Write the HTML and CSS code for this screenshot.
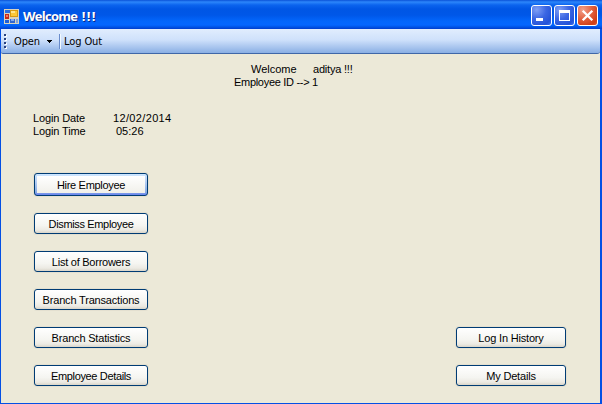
FILE: index.html
```html
<!DOCTYPE html>
<html lang="en">
<head>
<meta charset="utf-8">
<title>Welcome !!!</title>
<link rel="stylesheet" href="styles.css">
</head>
<body>
<div class="window">
  <header class="titlebar">
    <svg class="app-icon" width="15" height="15" viewBox="0 0 15 15" shape-rendering="crispEdges">
      <rect width="15" height="15" fill="#d9d3bd"/>
      <rect x="1" y="1" width="5" height="3" fill="#2b6fe0"/>
      <rect x="1" y="5" width="4" height="5" fill="#c62a18"/>
      <rect x="2" y="6" width="2" height="2" fill="#ee7b63"/>
      <rect x="6" y="1" width="8" height="7" fill="#d79a12"/>
      <rect x="7" y="2" width="6" height="5" fill="#fbc737"/>
      <rect x="7" y="2" width="4" height="2" fill="#ffe58b"/>
      <rect x="6" y="10" width="5" height="4" fill="#3567ce"/>
      <rect x="7" y="10" width="3" height="2" fill="#83aaf0"/>
      <rect x="1" y="11" width="4" height="3" fill="#1e5fda"/>
      <rect x="12" y="10" width="2" height="4" fill="#7da1df"/>
    </svg>
    <h1 class="title">Welcome <span class="marks">!!!</span></h1>
    <div class="controls">
      <button class="control" aria-label="Minimize"><svg width="21" height="21" viewBox="0 0 21 21"><path d="M5 13h7v3H5z" fill="#fff"/></svg></button>
      <button class="control" aria-label="Maximize"><svg width="21" height="21" viewBox="0 0 21 21"><path d="M5 5h11v11H5zM6 8v7h9V8z" fill="#fff" fill-rule="evenodd"/></svg></button>
      <button class="control close" aria-label="Close"><svg width="21" height="21" viewBox="0 0 21 21"><path d="M5.7 5.7l9.6 9.6M15.3 5.7l-9.6 9.6" stroke="#fff" stroke-width="2.3"/></svg></button>
    </div>
  </header>
  <nav class="toolbar">
    <span class="grip"><i></i><i></i><i></i><i></i></span>
    <span class="tool open">Open</span>
    <svg class="caret" width="5" height="3" viewBox="0 0 5 3" shape-rendering="crispEdges"><path d="M0 0h5v1H4v1H3v1H2V2H1V1H0z" fill="#000"/></svg>
    <span class="separator"></span>
    <span class="tool logout">Log Out</span>
  </nav>
  <main class="form">
    <section class="greeting">
      <div class="line first"><span class="welcome">Welcome</span><span class="user">aditya !!!</span></div>
      <div class="line"><span class="employee">Employee ID --&gt; 1</span></div>
    </section>
    <section class="login">
      <span class="date-label">Login Date</span><span class="date">12/02/2014</span>
      <span class="time-label">Login Time</span><span class="time">05:26</span>
    </section>
    <section class="actions">
      <div class="column">
        <button class="btn focused"><span class="hire">Hire Employee</span></button>
        <button class="btn"><span class="dismiss">Dismiss Employee</span></button>
        <button class="btn"><span class="borrowers">List of Borrowers</span></button>
        <button class="btn"><span class="transactions">Branch Transactions</span></button>
        <button class="btn"><span class="statistics">Branch Statistics</span></button>
        <button class="btn"><span class="details">Employee Details</span></button>
      </div>
      <div class="column narrow">
        <button class="btn"><span class="history">Log In History</span></button>
        <button class="btn"><span class="mine">My Details</span></button>
      </div>
    </section>
  </main>
</div>
</body>
</html>
```
FILE: styles.css
```css
* { box-sizing: border-box; }
body { margin: 0; overflow: hidden; font: 11px/13px "Liberation Sans", Arial, sans-serif; color: #000; }
button { padding: 0; font: inherit; color: inherit; }
svg { display: block; }

.window {
  width: 602px; height: 404px;
  display: flex; flex-direction: column;
  border: solid #0450e4; border-width: 0 2px 1px 1px;
  background: #ece9d8;
}
.titlebar {
  height: 29px; flex: none; margin: 0 -2px 0 -1px; padding: 0 4px;
  display: flex; align-items: center;
  background: linear-gradient(#0a52d8 0, #2c86fb 2px, #0b64ee 5px, #0056e5 9px, #0057e8 15px, #0366fb 21px, #0466ff 25px, #0054e6 27px, #003dce 29px);
}
.app-icon { margin-top: 3px; }
.title { margin: 3px 0 0 4px; font: bold 13px/16px "Open Sans", sans-serif; letter-spacing: -.75px; color: #fff; text-shadow: 1px 1px #0b2a8c; white-space: nowrap; }
.marks { margin-left: 2px; letter-spacing: 1.3px; }
.controls { display: flex; gap: 2px; margin: 2px 0 0 auto; }
.control {
  width: 21px; height: 21px; border: 1px solid #fff; border-radius: 3px;
  background: radial-gradient(circle at 25% 20%, #7f9ff5 0, #3b66e3 45%, #2452d8 80%, #3c72ee 100%);
}
.control svg { margin: -1px; }
.close { background: radial-gradient(circle at 25% 20%, #f2a08a 0, #e2613f 45%, #cf3d16 80%, #dd562e 100%); }

.toolbar {
  height: 25px; flex: none; padding-left: 3px;
  display: flex; align-items: center;
  border-bottom: 1px solid #3f67a8; border-bottom-right-radius: 3px; border-bottom-left-radius: 2px;
  background: linear-gradient(#e1edfe, #cfe1fb 45%, #8aafe4);
  font: 11px/14px "DejaVu Sans Condensed", "DejaVu Sans", sans-serif;
}
.grip { display: grid; gap: 2px; width: 3px; }
.grip i { width: 2px; height: 2px; background: #27417f; box-shadow: 1px 1px #fff; }
.tool { padding-top: 1px; letter-spacing: -.1px; white-space: nowrap; }
.open { width: 27px; margin-left: 7px; }
.caret { margin: 1px 0 0 6px; }
.separator { width: 2px; height: 15px; margin: 0 3px 0 7px; border-left: 1px solid #6a8ccb; border-right: 1px solid #f1f9ff; }

.form { flex: 1; padding-top: 9px; white-space: nowrap; }
.greeting { padding-left: 233px; }
.line { display: flex; height: 13px; }
.first { padding-left: 17px; }
.welcome { width: 61px; }
.user { margin-left: 1px; letter-spacing: -.2px; }
.employee { letter-spacing: -.3px; }
.login { display: grid; grid-template-columns: 80px auto; grid-auto-rows: 13px; padding: 23px 0 0 32px; }
.date-label, .time-label { letter-spacing: -.12px; }
.date { letter-spacing: .35px; }
.time { padding-left: 3px; }
.actions { display: flex; justify-content: space-between; align-items: flex-end; padding: 35px 34px 0 33px; }
.column { display: grid; grid-auto-rows: auto; gap: 17px; width: 114px; }
.narrow { width: 110px; }
.btn {
  height: 21px; display: flex; justify-content: center; align-items: center;
  border: 1px solid #003c74; border-radius: 3px;
  background: linear-gradient(#fff, #f5f5f1 60%, #eceae3 85%, #d9d5c9);
  box-shadow: 0 0 0 1px #e4e0d0;
}
.btn span { padding-top: 1px; }
.hire { letter-spacing: -.3px; }
.dismiss, .details { letter-spacing: -.35px; }
.borrowers { letter-spacing: -.25px; }
.transactions, .statistics, .history, .mine { letter-spacing: -.18px; }
.focused {
  height: 23px;
  background: linear-gradient(#fff, #f1f0ea) 2px 2px / 108px 17px no-repeat, linear-gradient(#cee7ff, #bcd4f6 30%, #89ade4 85%, #6982ee);
}
```
